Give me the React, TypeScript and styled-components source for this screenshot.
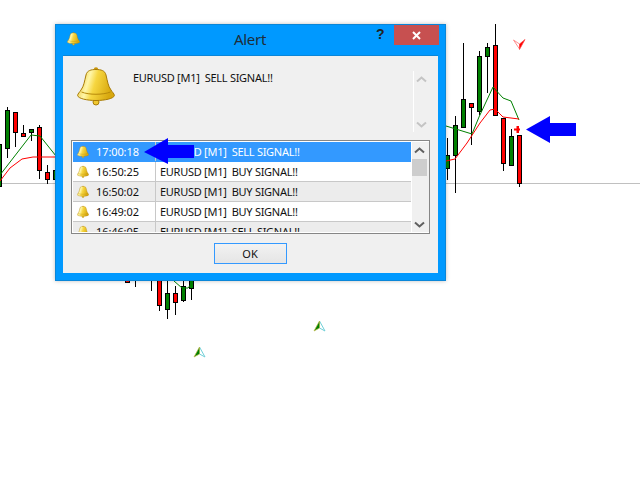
import React, { useId } from "react";
import styled, { createGlobalStyle } from "styled-components";

const GlobalStyle = createGlobalStyle`
  html, body {
    margin: 0;
    padding: 0;
    background: #fff;
  }
`;

const Page = styled.div`
  position: relative;
  width: 640px;
  height: 480px;
  overflow: hidden;
  background: #fff;
  font-family: "Noto Sans", "Open Sans", sans-serif;
  font-size: 11px;
  color: #111;
`;

const ChartSvg = styled.svg`
  position: absolute;
  left: 0;
  top: 0;
`;

const Dialog = styled.div`
  position: absolute;
  left: 55px;
  top: 24px;
  width: 391px;
  height: 257px;
  box-sizing: border-box;
  display: flex;
  flex-direction: column;
  background: #0099ff;
  border: 1px solid #0a86d8;
  box-shadow: 0 0 4px rgba(0, 0, 0, 0.25);
`;

const TitleBar = styled.div`
  position: relative;
  height: 30px;
  flex: none;
  display: flex;
  align-items: center;
  justify-content: center;
`;

const TitleBell = styled.div`
  position: absolute;
  left: 11px;
  top: 7px;
  width: 13px;
  height: 14px;
`;

const Title = styled.div`
  font-size: 15px;
  letter-spacing: -0.3px;
  color: #1f2d38;
  padding: 0 1px 3px 0;
`;

const HelpButton = styled.div`
  position: absolute;
  left: 320px;
  top: 1px;
  font-family: "Liberation Sans", sans-serif;
  font-weight: 700;
  font-size: 14px;
  color: #222;
`;

const CloseButton = styled.div`
  position: absolute;
  right: 6px;
  top: 0;
  width: 45px;
  height: 20px;
  display: flex;
  align-items: center;
  justify-content: center;
  background: #c75050;
`;

const Client = styled.div`
  flex: 1;
  margin: 0 7px 7px;
  padding: 0 8px;
  display: flex;
  flex-direction: column;
  background: #f0f0f0;
  border-top: 1px solid #0a86d8;
`;

const MessageRow = styled.div`
  height: 84px;
  flex: none;
  display: flex;
`;

const BigBell = styled.div`
  width: 38px;
  height: 40px;
  margin: 11px 0 0 6px;
`;

const MessageText = styled.div`
  flex: 1;
  margin: 14px 0 0 18px;
  white-space: pre;
  letter-spacing: -0.27px;
`;

const MessageScroll = styled.div`
  width: 17px;
  height: 61px;
  margin: 15px 0 0 0;
  display: flex;
  flex-direction: column;
  justify-content: space-between;
  align-items: center;
  padding: 5px 2px 4px 0;
  box-sizing: border-box;
  border-left: 1px solid #fff;
`;

const ListBox = styled.div`
  height: 94px;
  flex: none;
  box-sizing: border-box;
  display: flex;
  padding: 1px 0 1px 1px;
  background: #fff;
  border: 1px solid #868686;
`;

const Rows = styled.div`
  flex: 1;
  overflow: hidden;
`;

const Row = styled.div<{ $selected?: boolean; $shaded?: boolean }>`
  height: 20px;
  box-sizing: border-box;
  display: flex;
  align-items: center;
  white-space: pre;
  color: ${(p) => (p.$selected ? "#fff" : "#111")};
  background: ${(p) =>
    p.$selected ? "#3399ff" : p.$shaded ? "#ececec" : "#fff"};
  border-bottom: 1px solid ${(p) => (p.$selected ? "#3399ff" : "#c8c8c8")};
`;

const TimeCell = styled.div`
  width: 83px;
  height: 100%;
  flex: none;
  box-sizing: border-box;
  display: flex;
  align-items: center;
  gap: 7px;
  padding-left: 4px;
  letter-spacing: -0.1px;
  border-right: 1px solid #c8c8c8;
`;

const SmallBell = styled.div`
  width: 12px;
  height: 14px;
`;

const MessageCell = styled.div`
  padding-left: 4px;
  letter-spacing: -0.27px;
`;

const ListScroll = styled.div`
  position: relative;
  width: 17px;
  margin-left: 1px;
  flex: none;
  display: flex;
  flex-direction: column;
  justify-content: space-between;
  align-items: center;
  padding: 5px 2px 4px 0;
  box-sizing: border-box;
  background: #f0f0f0;
`;

const Thumb = styled.div`
  position: absolute;
  left: 0;
  top: 17px;
  width: 15px;
  height: 17px;
  background: #cdcdcd;
`;

const Footer = styled.div`
  flex: 1;
  display: flex;
  justify-content: center;
  padding-top: 9px;
`;

const OkButton = styled.div`
  width: 73px;
  height: 21px;
  margin-right: 1px;
  box-sizing: border-box;
  display: flex;
  align-items: center;
  justify-content: center;
  border: 1px solid #3399ff;
  background: linear-gradient(#f2f2f2, #e5e5e5);
`;

const ArrowSvg = styled.svg`
  position: absolute;
  left: 144px;
  top: 138px;
`;

type Candle = [x: number, top: number, bottom: number, wickTop: number, wickBottom: number, up: boolean];

const candles: Candle[] = [
  [-0.5, 144, 186, 140, 186, true],
  [7.5, 110, 148, 107, 158, true],
  [15.5, 112, 132, 112, 147, false],
  [23.5, 133, 136, 125, 137, false],
  [31.5, 129, 132, 129, 141, true],
  [39.5, 127, 170, 125, 179, false],
  [47.5, 172, 179, 165, 184, false],
  [55.5, 170, 179, 170, 179, true],
  [127.5, 278, 282, 278, 282, false],
  [135.5, 275, 280, 275, 287, true],
  [151.5, 270, 275, 270, 291, false],
  [159.5, 275, 305, 275, 311, false],
  [167.5, 293, 309, 281, 319, true],
  [175.5, 293, 302, 286, 315, false],
  [183.5, 286, 300, 281, 302, true],
  [191.5, 275, 288, 275, 300, true],
  [447.5, 155, 168, 138, 180, true],
  [455.5, 125, 155, 116, 193, true],
  [463.5, 99, 127, 43, 127, true],
  [471.5, 103, 107, 103, 145, false],
  [479.5, 56, 111, 51, 115, true],
  [487.5, 47, 56, 43, 93, true],
  [495.5, 45, 115, 24, 115, false],
  [503.5, 118, 163, 118, 171, false],
  [511.5, 136, 165, 129, 165, true],
  [519.5, 135, 183, 135, 187, false],
];

const greenLines = [
  "0,175 31,135 40,136 56,156",
  "174,281 182,288 188,288 193,282",
  "446,126 472,134 479,117 493,87 503,98 511,101 519,120",
];

const redLines = [
  "0,181 10,168 22,159 33,157 56,157",
  "446,161 455,159 467,143 480,123 490,110 495,109 503,117 519,119",
];

function UpMarker({ x, y }: { x: number; y: number }) {
  return (
    <g transform={`translate(${x} ${y})`}>
      <path d="M0 0 L5.5 10 L0 7 Z" fill="#fff" stroke="#70d0d8" />
      <path d="M0 0 L-5.5 10 L0 7 Z" fill="#008000" stroke="#b8b840" strokeWidth="0.7" />
    </g>
  );
}

function Chart() {
  return (
    <ChartSvg width="640" height="480">
      <line x1="0" y1="183.5" x2="640" y2="183.5" stroke="#c0c0c0" />
      {candles.map(([x, top, bottom, wickTop, wickBottom, up]) => (
        <g key={x} shapeRendering="crispEdges">
          <line x1={x} y1={wickTop} x2={x} y2={wickBottom} stroke="#000" />
          <rect
            x={x - 2}
            y={top + 0.5}
            width="4"
            height={bottom - top}
            fill={up ? "#008000" : "#ff0000"}
            stroke="#000"
          />
        </g>
      ))}
      {greenLines.map((points) => (
        <polyline key={points} points={points} fill="none" stroke="#008000" />
      ))}
      {redLines.map((points) => (
        <polyline key={points} points={points} fill="none" stroke="#ff0000" />
      ))}
      <path d="M513.5 40 L519.5 44 L519.5 49 Z" fill="#fff" stroke="#ff9090" />
      <path d="M525 39.5 L519.5 44 L519.5 49.5 Z" fill="#ff0000" stroke="#ff4040" strokeWidth="0.7" />
      <path d="M514 128.5 H516.5 V126 H519 V128.5 H520 V130.5 H519 V133 H516.5 V130.5 H514 Z" fill="#ff0000" />
      <UpMarker x={319.5} y={321} />
      <UpMarker x={199.5} y={347} />
      <path d="M526 129.5 L550 116 V123 H576 V136 H550 V143 Z" fill="#0000ff" />
    </ChartSvg>
  );
}

function Bell() {
  const id = useId();
  return (
    <svg width="100%" height="100%" viewBox="0 0 38 40">
      <defs>
        <linearGradient id={id} x1="0" y1="0" x2="1" y2="0.25">
          <stop offset="0" stopColor="#e8bb1c" />
          <stop offset="0.36" stopColor="#fff6a8" />
          <stop offset="0.55" stopColor="#f6d640" />
          <stop offset="1" stopColor="#d8a80e" />
        </linearGradient>
      </defs>
      <circle cx="19" cy="2.5" r="2.2" fill="#c9960a" />
      <circle cx="19" cy="35" r="3" fill="#f0c830" stroke="#a87c08" />
      <path
        d="M19 2.5 C14 2.5 10 3.5 9 8 C7.5 14 7 19 4 23 C2.5 25.5 0.8 26.5 0.6 28.5 C1 31.5 10 33.5 19 33.5 C28 33.5 37 31.5 37.4 28.5 C37.2 26.5 35.5 25.5 34 23 C31 19 30.5 14 29 8 C28 3.5 24 2.5 19 2.5 Z"
        fill={`url(#${id})`}
        stroke="#a87c08"
      />
      <path d="M4.5 25 C12 28 26 28 33.5 25" fill="none" stroke="#b88a0a" />
    </svg>
  );
}

function Chevron({ down, color }: { down?: boolean; color: string }) {
  return (
    <svg width="11" height="7" viewBox="0 0 11 7">
      <path
        d={down ? "M1 1.5 L5.5 5.5 L10 1.5" : "M1 5.5 L5.5 1.5 L10 5.5"}
        fill="none"
        stroke={color}
        strokeWidth="2"
      />
    </svg>
  );
}

const alerts = [
  { time: "17:00:18", signal: "SELL" },
  { time: "16:50:25", signal: "BUY" },
  { time: "16:50:02", signal: "BUY" },
  { time: "16:49:02", signal: "BUY" },
  { time: "16:46:05", signal: "SELL" },
];

export default function App() {
  return (
    <Page>
      <GlobalStyle />
      <Chart />
      <Dialog>
        <TitleBar>
          <TitleBell>
            <Bell />
          </TitleBell>
          <Title>Alert</Title>
          <HelpButton>?</HelpButton>
          <CloseButton>
            <svg width="9" height="9" viewBox="0 0 9 9">
              <path d="M1 1 L8 8 M8 1 L1 8" stroke="#fff" strokeWidth="2" />
            </svg>
          </CloseButton>
        </TitleBar>
        <Client>
          <MessageRow>
            <BigBell>
              <Bell />
            </BigBell>
            <MessageText>EURUSD [M1]  SELL SIGNAL!!</MessageText>
            <MessageScroll>
              <Chevron color="#c4c4c4" />
              <Chevron down color="#c4c4c4" />
            </MessageScroll>
          </MessageRow>
          <ListBox>
            <Rows>
              {alerts.map((alert, index) => (
                <Row
                  key={alert.time}
                  $selected={index === 0}
                  $shaded={index % 2 === 0}
                >
                  <TimeCell>
                    <SmallBell>
                      <Bell />
                    </SmallBell>
                    {alert.time}
                  </TimeCell>
                  <MessageCell>{`EURUSD [M1]  ${alert.signal} SIGNAL!!`}</MessageCell>
                </Row>
              ))}
            </Rows>
            <ListScroll>
              <Chevron color="#606060" />
              <Thumb />
              <Chevron down color="#606060" />
            </ListScroll>
          </ListBox>
          <Footer>
            <OkButton>OK</OkButton>
          </Footer>
        </Client>
      </Dialog>
      <ArrowSvg width="50" height="28">
        <path d="M0 14 L24 0 V7 H50 V20 H24 V26 Z" fill="#0000ff" />
      </ArrowSvg>
    </Page>
  );
}
